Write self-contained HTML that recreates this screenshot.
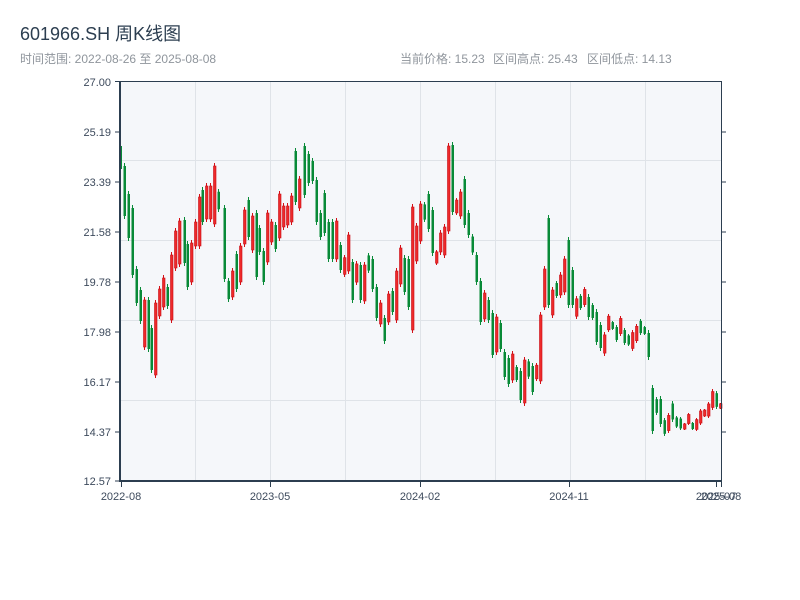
<!DOCTYPE html>
<html><head><meta charset="utf-8"><style>
body{margin:0;background:#fff;width:800px;height:600px;overflow:hidden;font-family:"Liberation Sans","Noto Sans CJK SC",sans-serif}
</style></head><body>
<svg id="s" width="800" height="600" xmlns="http://www.w3.org/2000/svg" style="position:absolute;left:0;top:0;font-family:'Liberation Sans','Noto Sans CJK SC',sans-serif">
<text x="20" y="40" font-size="18" fill="#2c3e50">601966.SH 周K线图</text>
<text x="20" y="63" font-size="12" fill="#8f959c">时间范围: 2022-08-26 至 2025-08-08</text>
<text x="400" y="63" font-size="12" fill="#8f959c">当前价格: 15.23</text>
<text x="493" y="63" font-size="12" fill="#8f959c">区间高点: 25.43</text>
<text x="587" y="63" font-size="12" fill="#8f959c">区间低点: 14.13</text>
<rect x="121" y="81" width="600" height="400" fill="#f5f7fa"/>
<g stroke="#dfe3e8" stroke-width="1">
<line x1="195.5" y1="81" x2="195.5" y2="481"/><line x1="270.5" y1="81" x2="270.5" y2="481"/><line x1="345.5" y1="81" x2="345.5" y2="481"/><line x1="420.5" y1="81" x2="420.5" y2="481"/><line x1="495.5" y1="81" x2="495.5" y2="481"/><line x1="570.5" y1="81" x2="570.5" y2="481"/><line x1="645.5" y1="81" x2="645.5" y2="481"/>
<line x1="121" y1="160.5" x2="721" y2="160.5"/><line x1="121" y1="240.5" x2="721" y2="240.5"/><line x1="121" y1="320.5" x2="721" y2="320.5"/><line x1="121" y1="400.5" x2="721" y2="400.5"/>
</g>
<g id="c"></g>
<g stroke="#2c3e50" stroke-width="1">
<line x1="115" y1="81.5" x2="721" y2="81.5"/>
<line x1="120" y1="81" x2="120" y2="482" stroke-width="2"/>
<line x1="120" y1="481" x2="721" y2="481" stroke-width="2"/>
<line x1="721.5" y1="81" x2="721.5" y2="482"/>
<line x1="115" y1="132" x2="120" y2="132"/><line x1="115" y1="182" x2="120" y2="182"/><line x1="115" y1="232" x2="120" y2="232"/><line x1="115" y1="282" x2="120" y2="282"/><line x1="115" y1="332" x2="120" y2="332"/><line x1="115" y1="382" x2="120" y2="382"/><line x1="115" y1="432" x2="120" y2="432"/><line x1="115" y1="481" x2="120" y2="481"/>
<line x1="721" y1="132" x2="726" y2="132"/><line x1="721" y1="182" x2="726" y2="182"/><line x1="721" y1="232" x2="726" y2="232"/><line x1="721" y1="282" x2="726" y2="282"/><line x1="721" y1="332" x2="726" y2="332"/><line x1="721" y1="382" x2="726" y2="382"/><line x1="721" y1="432" x2="726" y2="432"/>
<line x1="121.5" y1="481" x2="121.5" y2="487"/><line x1="270.5" y1="481" x2="270.5" y2="487"/><line x1="420.5" y1="481" x2="420.5" y2="487"/><line x1="569.5" y1="481" x2="569.5" y2="487"/><line x1="716.5" y1="481" x2="716.5" y2="487"/><line x1="721.5" y1="481" x2="721.5" y2="487"/>
</g>
<g font-size="11" fill="#3d4a5c" text-anchor="end">
<text x="111" y="86">27.00</text><text x="111" y="136">25.19</text><text x="111" y="186">23.39</text><text x="111" y="236">21.58</text><text x="111" y="286">19.78</text><text x="111" y="336">17.98</text><text x="111" y="386">16.17</text><text x="111" y="436">14.37</text><text x="111" y="485">12.57</text>
</g>
<g font-size="11" fill="#3d4a5c" text-anchor="middle">
<text x="121" y="500">2022-08</text><text x="270" y="500">2023-05</text><text x="420" y="500">2024-02</text><text x="569" y="500">2024-11</text><text x="716" y="500">2025-07</text><text x="721" y="500">2025-08</text>
</g>
</svg>
<script>
var d=[[120,143,172,'g'],[124,163,219,'g'],[128,191,241,'g'],[132,205,278,'g'],[136,266,306,'g'],[140,287,324,'g'],[144,297,350,'r'],[148,297,352,'g'],[151,325,373,'g'],[155,300,378,'r'],[159,286,319,'r'],[163,275,310,'r'],[167,284,309,'g'],[171,252,323,'r'],[175,228,271,'r'],[179,218,267,'r'],[184,217,266,'g'],[187,241,290,'g'],[191,240,285,'r'],[195,219,249,'r'],[199,194,249,'r'],[202,187,225,'g'],[206,183,222,'r'],[210,183,222,'r'],[214,163,227,'r'],[218,189,212,'g'],[224,205,282,'g'],[228,278,302,'g'],[232,268,300,'r'],[236,251,292,'g'],[240,243,285,'r'],[244,207,247,'r'],[248,197,240,'g'],[252,213,253,'r'],[256,210,280,'g'],[259,225,255,'g'],[263,248,285,'g'],[267,210,265,'r'],[271,219,245,'r'],[275,222,252,'g'],[279,191,241,'r'],[283,203,230,'r'],[287,203,228,'r'],[291,193,225,'r'],[295,148,205,'g'],[299,176,211,'r'],[304,143,198,'g'],[308,151,186,'g'],[312,158,184,'g'],[316,177,225,'g'],[320,210,240,'g'],[324,190,236,'g'],[328,219,262,'g'],[332,219,262,'g'],[336,218,262,'r'],[340,242,273,'g'],[344,255,277,'r'],[348,232,274,'r'],[352,259,303,'g'],[356,261,285,'r'],[360,262,303,'g'],[364,262,304,'r'],[368,253,273,'g'],[372,256,292,'g'],[376,284,321,'g'],[380,300,327,'r'],[384,315,344,'g'],[388,291,325,'r'],[392,288,315,'g'],[396,268,323,'r'],[400,245,287,'r'],[404,255,295,'g'],[408,256,310,'g'],[412,204,333,'r'],[416,223,264,'r'],[420,201,244,'r'],[424,202,222,'g'],[428,191,232,'g'],[432,207,256,'g'],[436,250,265,'r'],[440,230,255,'r'],[444,224,258,'r'],[448,143,234,'r'],[452,142,215,'g'],[456,198,215,'r'],[460,189,219,'r'],[464,176,228,'g'],[468,210,238,'g'],[472,234,255,'g'],[476,252,285,'g'],[480,278,325,'g'],[484,290,322,'r'],[488,297,323,'g'],[492,310,358,'g'],[496,314,355,'r'],[500,320,352,'g'],[504,349,380,'g'],[508,355,387,'g'],[512,351,383,'r'],[516,365,382,'g'],[520,368,403,'g'],[524,357,406,'r'],[528,359,379,'g'],[532,363,395,'g'],[536,363,381,'r'],[540,312,384,'r'],[544,266,310,'r'],[548,215,308,'g'],[552,287,318,'r'],[556,281,298,'g'],[560,272,298,'r'],[564,256,295,'r'],[568,237,308,'g'],[572,267,308,'g'],[576,296,319,'r'],[580,294,310,'g'],[584,287,307,'r'],[588,294,320,'g'],[592,303,320,'g'],[596,309,345,'g'],[600,322,351,'g'],[604,332,356,'r'],[608,314,332,'r'],[612,321,330,'g'],[616,325,342,'g'],[620,316,336,'r'],[624,328,345,'g'],[628,334,346,'g'],[632,330,351,'r'],[636,324,343,'r'],[640,319,335,'g'],[644,326,335,'g'],[648,330,360,'g'],[652,385,434,'g'],[656,397,415,'g'],[660,396,427,'g'],[664,418,436,'g'],[668,413,433,'r'],[672,401,422,'g'],[676,416,428,'g'],[680,417,430,'g'],[684,423,430,'r'],[688,413,425,'r'],[692,422,430,'g'],[696,418,431,'r'],[700,409,425,'r'],[704,409,417,'r'],[708,402,418,'r'],[712,389,410,'r'],[716,391,409,'g'],[720,403,409,'r']];
var h='';
d.forEach(function(c){var x=c[0],t=c[1],b=c[2],g=c[3]=='g';
var col=g?'#088a37':'#d40f16';
h+='<rect x="'+(x)+'" y="'+t+'" width="1" height="'+(b-t)+'" fill="'+col+'"/>';
var bt=t+Math.min(3,(b-t)*0.12),bb=b-Math.min(3,(b-t)*0.12);
h+='<rect x="'+(x-0.5)+'" y="'+bt+'" width="2.5" height="'+Math.max(1,bb-bt)+'" fill="'+(g?col:'#ee2a2a')+'" stroke="'+(g?'none':'#c80d14')+'" stroke-width="'+(g?0:0.6)+'"/>';});
document.getElementById('c').innerHTML=h;
</script>
</body></html>
